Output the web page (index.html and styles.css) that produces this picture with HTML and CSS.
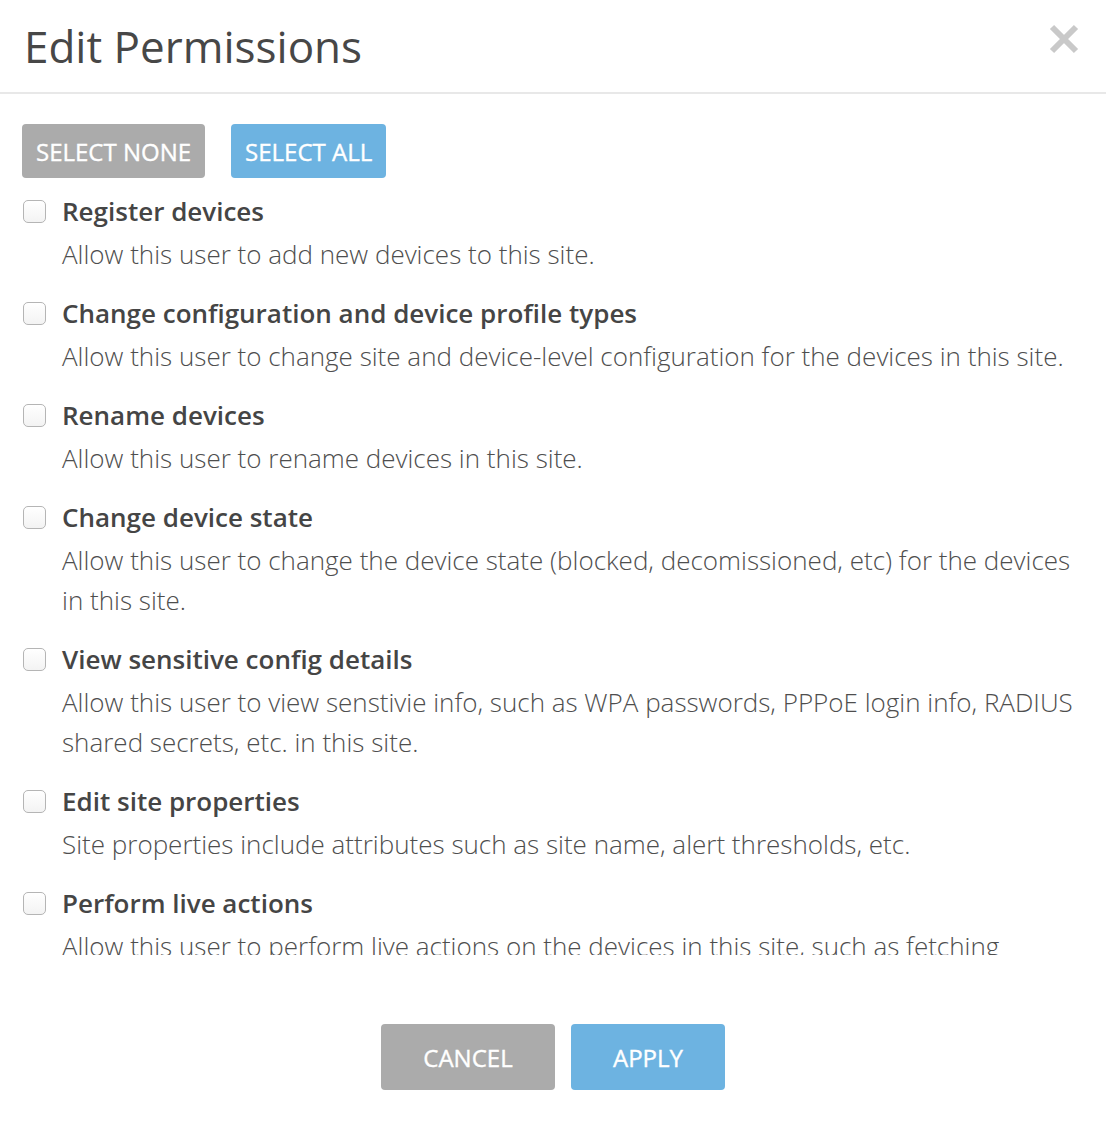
FILE: index.html
```html
<!DOCTYPE html>
<html lang="en">
<head>
<meta charset="utf-8">
<title>Edit Permissions</title>
<link rel="stylesheet" href="styles.css">
</head>
<body>
<div class="modal">
  <header class="modal-header">
    <h1 class="modal-title">Edit Permissions</h1>
    <button class="close" aria-label="Close">
      <svg width="30" height="30" viewBox="0 0 30 30"><path d="M3 3 L27 27 M27 3 L3 27" stroke="#c9c9c9" stroke-width="6" stroke-linecap="butt"/></svg>
    </button>
  </header>
  <div class="modal-body">
    <div class="bulk">
      <button class="btn btn-grey">SELECT NONE</button>
      <button class="btn btn-blue">SELECT ALL</button>
    </div>
    <ul class="perms">
      <li class="perm">
        <label class="perm-title"><input type="checkbox" class="cb"><span>Register devices</span></label>
        <p class="perm-desc">Allow this user to add new devices to this site.</p>
      </li>
      <li class="perm">
        <label class="perm-title"><input type="checkbox" class="cb"><span>Change configuration and device profile types</span></label>
        <p class="perm-desc">Allow this user to change site and device-level configuration for the devices in this site.</p>
      </li>
      <li class="perm">
        <label class="perm-title"><input type="checkbox" class="cb"><span>Rename devices</span></label>
        <p class="perm-desc">Allow this user to rename devices in this site.</p>
      </li>
      <li class="perm">
        <label class="perm-title"><input type="checkbox" class="cb"><span>Change device state</span></label>
        <p class="perm-desc">Allow this user to change the device state (blocked, decomissioned, etc) for the devices in this site.</p>
      </li>
      <li class="perm">
        <label class="perm-title"><input type="checkbox" class="cb"><span>View sensitive config details</span></label>
        <p class="perm-desc">Allow this user to view senstivie info, such as WPA passwords, PPPoE login info, RADIUS shared secrets, etc. in this site.</p>
      </li>
      <li class="perm">
        <label class="perm-title"><input type="checkbox" class="cb"><span>Edit site properties</span></label>
        <p class="perm-desc">Site properties include attributes such as site name, alert thresholds, etc.</p>
      </li>
      <li class="perm">
        <label class="perm-title"><input type="checkbox" class="cb"><span>Perform live actions</span></label>
        <p class="perm-desc">Allow this user to perform live actions on the devices in this site, such as fetching device logs, running speed tests, etc.</p>
      </li>
    </ul>
  </div>
  <footer class="modal-footer">
    <button class="btn btn-grey btn-lg btn-cancel">CANCEL</button>
    <button class="btn btn-blue btn-lg btn-apply">APPLY</button>
  </footer>
</div>
</body>
</html>
```
FILE: styles.css
```css
* { box-sizing: border-box; }
html, body { margin: 0; padding: 0; background: #fff; }
body {
  font-family: "Open Sans", "Liberation Sans", sans-serif;
  color: #444;
}
.modal {
  width: 1106px;
  height: 1122px;
  display: flex;
  flex-direction: column;
}
.modal-header {
  height: 94px;
  border-bottom: 2px solid #e8e8e8;
  display: flex;
  align-items: flex-start;
  justify-content: space-between;
  padding: 0 27px 0 24px;
  flex: none;
}
.modal-title {
  margin: 0;
  font-size: 44px;
  font-weight: 400;
  line-height: 92px;
  color: #474747;
}
.close {
  border: 0;
  background: none;
  padding: 0;
  margin-top: 24px;
  width: 30px;
  height: 30px;
  cursor: pointer;
}
.close svg { display: block; }
.modal-body {
  flex: none;
  height: 861px;
  overflow: hidden;
  padding: 30px 28px 0 22px;
}
.bulk {
  display: flex;
  gap: 26px;
}
.btn {
  border: 0;
  border-radius: 4px;
  color: #fff;
  font-family: "Open Sans", "Liberation Sans", sans-serif;
  font-size: 24px;
  font-weight: 400;
  height: 54px;
  padding: 0 14px;
  -webkit-text-stroke: 0.35px #fff;
  cursor: pointer;
}
.btn-grey { background: #ababab; }
.btn-blue { background: #6db3e1; }
.perms {
  list-style: none;
  margin: 10px 0 0;
  padding: 0;
}
.perm {
  padding-bottom: 16px;
}
.perm-title {
  display: flex;
  align-items: center;
  gap: 16px;
  height: 46px;
  font-size: 26px;
  font-weight: 600;
  color: #454545;
}
.cb {
  appearance: none;
  -webkit-appearance: none;
  margin: 0 0 0 1px;
  width: 23px;
  height: 23px;
  border: 1px solid #b5b5b5;
  border-radius: 5px;
  background: linear-gradient(#fff, #f3f3f3);
  flex: none;
}
.perm-desc {
  margin: 0;
  padding-left: 40px;
  font-size: 26px;
  font-weight: 300;
  line-height: 40px;
  color: #4e4e4e;
}
.modal-footer {
  flex: 1;
  display: flex;
  justify-content: center;
  align-items: flex-start;
  gap: 16px;
  padding-top: 69px;
}
.btn-lg {
  height: 66px;
}
.btn-cancel { width: 174px; }
.btn-apply { width: 154px; }
```
